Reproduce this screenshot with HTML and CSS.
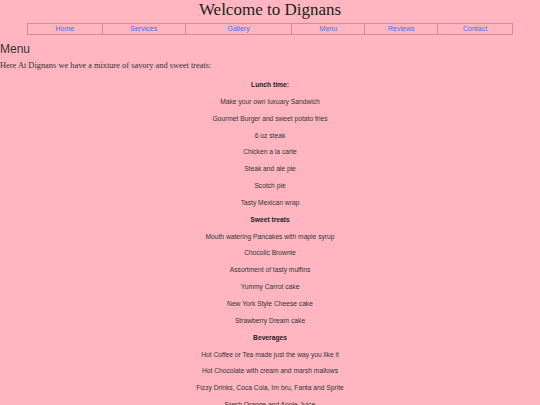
FILE: index.html
```html
<!DOCTYPE html>
<html>
<head>
<meta charset="utf-8">
<title>Dignans</title>
<link rel="stylesheet" href="styles.css">
</head>
<body>
<h1 class="title">Welcome to Dignans</h1>
<table class="nav">
  <colgroup>
    <col class="c1"><col class="c2"><col class="c3"><col class="c4"><col class="c5"><col class="c6">
  </colgroup>
  <tr>
    <td><a href="#">Home</a></td>
    <td><a href="#">Services</a></td>
    <td><a href="#">Gallery</a></td>
    <td><a href="#">Menu</a></td>
    <td><a href="#">Reviews</a></td>
    <td><a href="#">Contact</a></td>
  </tr>
</table>
<h2 class="heading">Menu</h2>
<p class="intro">Here At Dignans we have a mixture of savory and sweet treats:</p>
<div class="menu">
  <div class="item head">Lunch time:</div>
  <div class="item">Make your own luxuary Sandwich</div>
  <div class="item">Gourmet Burger and sweet potato fries</div>
  <div class="item">6 oz steak</div>
  <div class="item">Chicken a la carte</div>
  <div class="item">Steak and ale pie</div>
  <div class="item">Scotch pie</div>
  <div class="item">Tasty Mexican wrap</div>
  <div class="item head">Sweet treats</div>
  <div class="item">Mouth watering Pancakes with maple syrup</div>
  <div class="item">Chocolic Brownie</div>
  <div class="item">Assortment of tasty muffins</div>
  <div class="item">Yummy Carrot cake</div>
  <div class="item">New York Style Cheese cake</div>
  <div class="item">Strawberry Dream cake</div>
  <div class="item head">Beverages</div>
  <div class="item">Hot Coffee or Tea made just the way you like it</div>
  <div class="item">Hot Chocolate with cream and marsh mallows</div>
  <div class="item">Fizzy Drinks, Coca Cola, Irn bru, Fanta and Sprite</div>
  <div class="item">Fresh Orange and Apple Juice</div>
</div>
</body>
</html>
```
FILE: styles.css
```css
html, body {
  margin: 0;
  padding: 0;
  background: #ffb6c1;
  color: #333333;
}
.title {
  margin: 0;
  font-family: "Liberation Serif", serif;
  font-weight: normal;
  font-size: 17px;
  line-height: 20px;
  text-align: center;
  color: #222;
}
.nav {
  width: 486px;
  margin: 3px auto 0;
  border-collapse: collapse;
  table-layout: fixed;
}
.nav td {
  border: 1px solid #cc8e98;
  text-align: center;
  font-family: "Liberation Sans", Arial, sans-serif;
  font-size: 7px;
  height: 10px;
  padding: 0;
  line-height: 10px;
}
.c1 { width: 15.43%; }
.c2 { width: 17.08%; }
.c3 { width: 22.02%; }
.c4 { width: 15.02%; }
.c5 { width: 15.02%; }
.c6 { width: 15.43%; }
.nav a {
  color: #4a6ee0;
  text-decoration: none;
}
.heading {
  margin: 6px 0 0;
  font-family: "Liberation Sans", Arial, sans-serif;
  font-weight: normal;
  font-size: 12px;
  line-height: 16px;
}
.intro {
  margin: 3px 0 0;
  font-family: "Liberation Serif", serif;
  font-size: 8.4px;
  line-height: 12px;
}
.menu {
  margin-top: 5px;
  font-family: "Liberation Sans", Arial, sans-serif;
  font-size: 6.7px;
  text-align: center;
}
.item {
  line-height: 16.85px;
  height: 16.85px;
}
.head {
  font-weight: bold;
  color: #222;
}
```
